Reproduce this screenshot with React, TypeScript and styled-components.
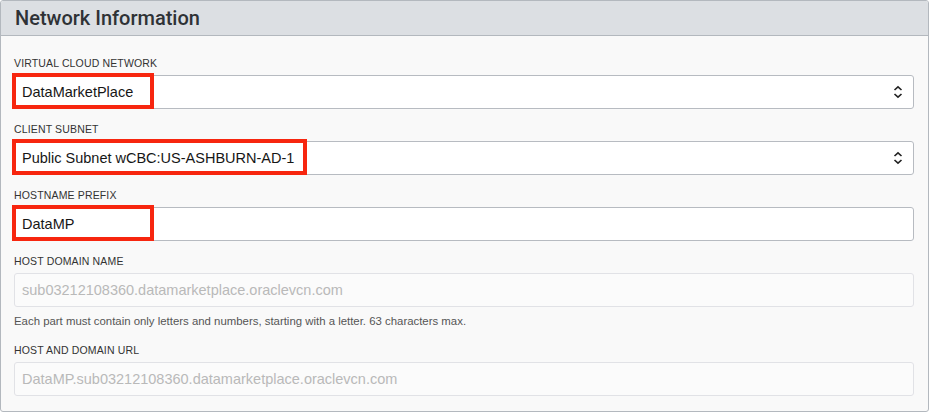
import React from "react";
import styled, { createGlobalStyle } from "styled-components";

const Global = createGlobalStyle`
  html, body { margin: 0; padding: 0; background: #ffffff; }
  body { font-family: "Liberation Sans", Arial, sans-serif; }
  * { box-sizing: border-box; }
`;

const Panel = styled.section`
  width: 929px;
  height: 412px;
  border: 1px solid #b3b8be;
  border-radius: 3px;
  background: #f9f9f9;
  overflow: hidden;
  display: flex;
  flex-direction: column;
`;

const Header = styled.header`
  height: 35px;
  flex: none;
  background: #dcdfe3;
  border-bottom: 1px solid #b3b8be;
  display: flex;
  align-items: center;
  padding: 0 14px;
`;

const Title = styled.h2`
  margin: 0;
  font-family: Roboto, "Liberation Sans", Arial, sans-serif;
  font-size: 20px;
  font-weight: 500;
  color: #2f3236;
`;

const Body = styled.div`
  display: flex;
  flex-direction: column;
  padding: 20px 14px 0 13px;
`;

const Group = styled.div<{ $gap?: number }>`
  display: flex;
  flex-direction: column;
  margin-bottom: ${(p) => p.$gap ?? 13}px;
`;

const Label = styled.label`
  font-size: 10.5px;
  line-height: 14px;
  letter-spacing: 0.15px;
  color: #333;
  text-transform: uppercase;
  margin-bottom: 5px;
`;

const Field = styled.div<{ $disabled?: boolean }>`
  position: relative;
  height: 34px;
  border: 1px solid ${(p) => (p.$disabled ? "#e1e2e6" : "#b7bbc1")};
  border-radius: 3px;
  background: ${(p) => (p.$disabled ? "#fbfbfb" : "#ffffff")};
  display: flex;
  align-items: center;
  justify-content: space-between;
  padding: 0 10px 0 7px;
  font-size: 14.5px;
  color: ${(p) => (p.$disabled ? "#b9b9b9" : "#161616")};
`;

const Highlight = styled.span`
  position: absolute;
  left: -3px;
  top: -3px;
  height: 36px;
  border: 4px solid #f7260f;
  pointer-events: none;
`;

const Help = styled.p`
  margin: 7px 0 15px;
  font-size: 11.4px;
  line-height: 14px;
  color: #555;
`;

const Chevrons = () => (
  <svg width="10" height="14" viewBox="0 0 10 14" aria-hidden>
    <path d="M1.5 5 L5 1.8 L8.5 5" fill="none" stroke="#222" strokeWidth="1.6" />
    <path d="M1.5 9 L5 12.2 L8.5 9" fill="none" stroke="#222" strokeWidth="1.6" />
  </svg>
);

type Item = {
  label: string;
  value: string;
  select?: boolean;
  disabled?: boolean;
  mark?: number;
  help?: string;
};

const items: Item[] = [
  { label: "Virtual Cloud Network", value: "DataMarketPlace", select: true, mark: 142 },
  { label: "Client Subnet", value: "Public Subnet wCBC:US-ASHBURN-AD-1", select: true, mark: 295 },
  { label: "Hostname Prefix", value: "DataMP", mark: 142 },
  {
    label: "Host Domain Name",
    value: "sub03212108360.datamarketplace.oraclevcn.com",
    disabled: true,
    help: "Each part must contain only letters and numbers, starting with a letter. 63 characters max.",
  },
  {
    label: "Host and Domain URL",
    value: "DataMP.sub03212108360.datamarketplace.oraclevcn.com",
    disabled: true,
  },
];

export default function App() {
  return (
    <>
      <Global />
      <Panel>
        <Header>
          <Title>Network Information</Title>
        </Header>
        <Body>
          {items.map((it) => (
            <Group key={it.label} $gap={it.help ? 0 : 13}>
              <Label>{it.label}</Label>
              <Field $disabled={it.disabled}>
                <span>{it.value}</span>
                {it.select && <Chevrons />}
                {it.mark && <Highlight style={{ width: it.mark }} />}
              </Field>
              {it.help && <Help>{it.help}</Help>}
            </Group>
          ))}
        </Body>
      </Panel>
    </>
  );
}
